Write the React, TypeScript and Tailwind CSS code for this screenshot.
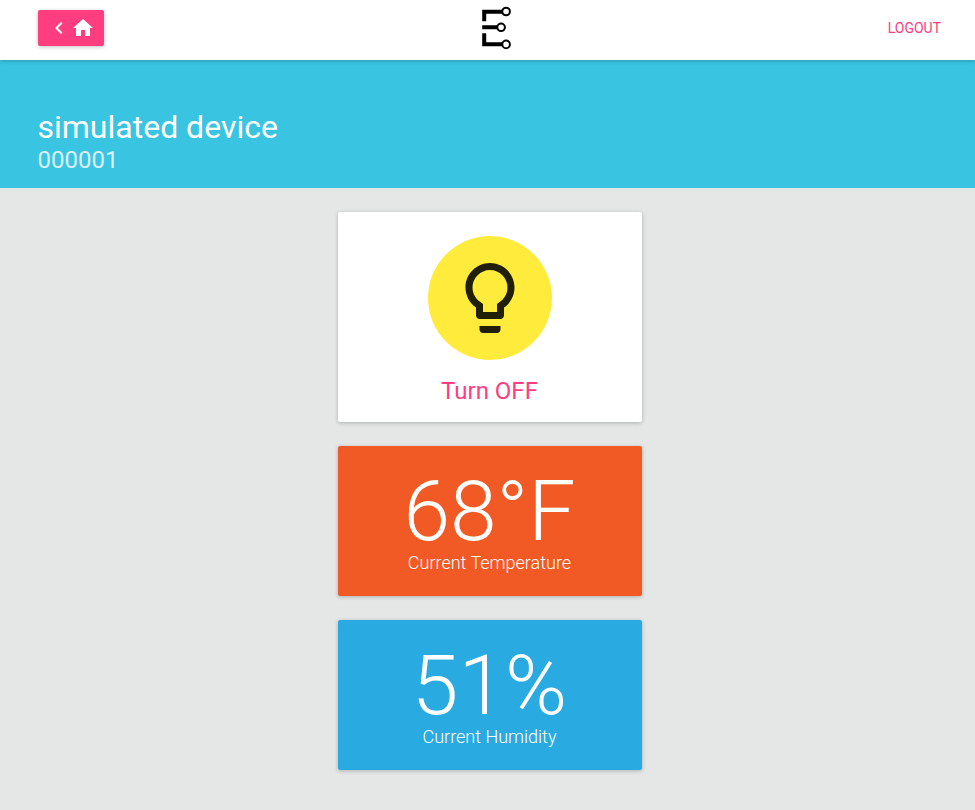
import React from "react";

function Logo() {
  return (
    <svg width="30" height="44" viewBox="0 0 30 44" fill="none" stroke="#000" strokeWidth="4">
      <path d="M2.200 15.200V5.800H20M0.200 21.300H15M2.200 27.300V38.300H20" />
      <circle cx="24.100" cy="5.500" r="3.800" strokeWidth="2" fill="#fff" />
      <circle cx="19.100" cy="21.300" r="3.800" strokeWidth="2" fill="#fff" />
      <circle cx="24.100" cy="38.400" r="3.800" strokeWidth="2" fill="#fff" />
    </svg>
  );
}

function Reading({ value, label, color }: { value: string; label: string; color: string }) {
  return (
    <section className={`${color} flex h-[150px] w-[304px] flex-col items-center rounded-[2px] pt-6 text-white shadow-[0_1px_4px_rgba(0,0,0,0.24)]`}>
      <div className="h-[82px] pr-px text-[84px] leading-[84px] font-light">{value}</div>
      <div className="pr-px text-[18px] leading-[22px] font-light">{label}</div>
    </section>
  );
}

export default function App() {
  return (
    <div className="flex h-[810px] w-[975px] flex-col bg-[#e5e7e6] font-['Roboto',sans-serif]">
      <header className="z-10 flex h-[60px] shrink-0 items-center justify-between bg-white pr-[34px] pb-1 pl-[38px] shadow-[0_1px_4px_rgba(0,0,0,0.24)]">
        <div className="flex flex-1">
          <button className="flex h-9 w-[66px] items-center rounded-[2px] bg-[#ff3d7f] pl-[9px] text-white shadow-[0_1px_4px_rgba(0,0,0,0.24)]">
            <svg width="24" height="24" viewBox="0 0 24 24" fill="currentColor"><path d="M15.41 7.410 14 6l-6 6 6 6 1.410-1.410L10.830 12z" /></svg>
            <svg width="24" height="24" viewBox="0 0 24 24" fill="currentColor"><path d="M10 20v-6h4v6h5v-8h3L12 3 2 12h3v8z" /></svg>
          </button>
        </div>
        <div className="pl-[15px]"><Logo /></div>
        <div className="flex-1 text-right text-[14px] text-[#ff3d7f]">LOGOUT</div>
      </header>
      <div className="h-32 shrink-0 bg-[#39c4e1] pt-[48px] pl-[37.5px] text-white">
        <h1 className="text-[32px] leading-[38px]">simulated device</h1>
        <p className="text-[24px] leading-[28px] opacity-80">000001</p>
      </div>
      <main className="flex flex-col items-center gap-6 pt-6 pl-[5px]">
        <section className="flex h-[210px] w-[304px] flex-col items-center rounded-[2px] bg-white pt-6 shadow-[0_1px_4px_rgba(0,0,0,0.24)]">
          <div className="flex size-[124px] items-center justify-center rounded-full bg-[#ffeb3b]">
            <svg width="84" height="84" viewBox="0 0 24 24" fill="#211f08"><path d="M9 21c0 .55.45 1 1 1h4c.55 0 1-.45 1-1v-1H9v1zm3-19C8.140 2 5 5.140 5 9c0 2.380 1.190 4.470 3 5.740V17c0 .55.45 1 1 1h6c.55 0 1-.45 1-1v-2.260c1.810-1.270 3-3.360 3-5.740 0-3.860-3.140-7-7-7zm2.850 11.100-.85.6V16h-4v-2.300l-.85-.6C7.800 12.160 7 10.630 7 9c0-2.760 2.240-5 5-5s5 2.240 5 5c0 1.630-.8 3.160-2.150 4.100z" /></svg>
          </div>
          <div className="mt-4 pr-px text-[24px] leading-[30px] text-[#ff3d7f]">Turn OFF</div>
        </section>
        <Reading value="68°F" label="Current Temperature" color="bg-[#f15a24]" />
        <Reading value="51%" label="Current Humidity" color="bg-[#29abe2]" />
      </main>
    </div>
  );
}
